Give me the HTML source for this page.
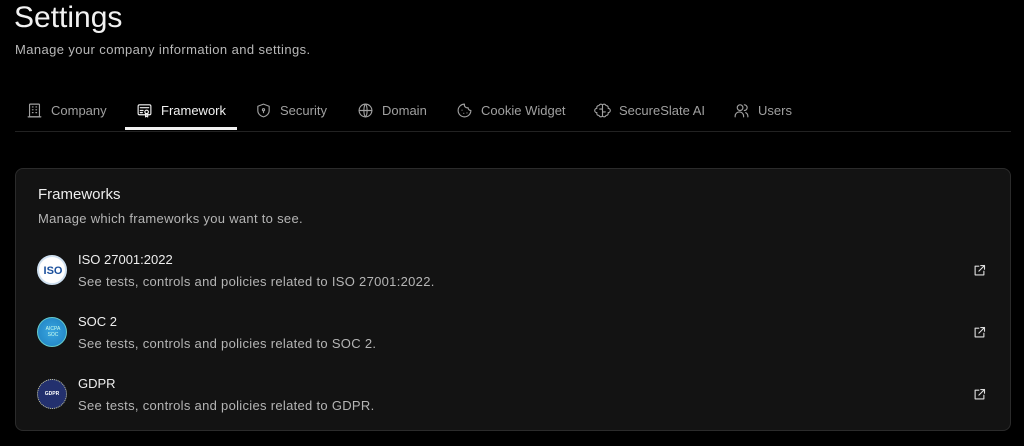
<!DOCTYPE html>
<html><head><meta charset="utf-8"><style>
*{margin:0;padding:0;box-sizing:border-box}
body{width:1024px;height:446px;background:#000;font-family:"Liberation Sans",sans-serif;color:#e8e8e8;position:relative;overflow:hidden}
.a{position:absolute;white-space:nowrap}
.tab{position:absolute;top:102px;font-size:13px;color:#a0a0a0;display:flex;align-items:center;gap:8px}
.tab svg{width:17px;height:17px;fill:none;stroke:#a0a0a0;stroke-width:1.6;stroke-linecap:round;stroke-linejoin:round}
.tab.on{color:#f2f2f2}.tab.on svg{stroke:#f2f2f2}
.card{position:absolute;left:15px;top:168px;width:996px;height:263px;background:#131313;border:1px solid #2b2b2b;border-radius:8px}
.t{font-size:13px;color:#eee}
.d{font-size:13px;color:#b5b5b5;letter-spacing:0.3px}
.lg{position:absolute;left:37px;width:30px;height:30px;border-radius:50%}
.ext{position:absolute;left:972px;width:15px;height:15px;fill:none;stroke:#ddd;stroke-width:1.8;stroke-linecap:round;stroke-linejoin:round}
</style></head><body>
<div class="a" style="left:14px;top:1px;font-size:30px;color:#f2f2f2">Settings</div>
<div class="a" style="left:15px;top:42px;font-size:13px;color:#b8b8b8;letter-spacing:0.4px">Manage your company information and settings.</div>

<div class="tab" style="left:26px"><svg viewBox="0 0 24 24"><rect x="5" y="3" width="14" height="18" rx="1"/><path d="M9 7h1M14 7h1M9 11h1M14 11h1M9 15h1M14 15h1M3 21h18"/></svg>Company</div>
<div class="tab on" style="left:136px"><svg viewBox="0 0 24 24"><rect x="3" y="4" width="18" height="14" rx="2"/><path d="M6 8h12M6 12h4M6 15h3"/><circle cx="15" cy="14" r="2.5"/><path d="M13.5 16v5l1.5-1 1.5 1v-5"/></svg>Framework</div>
<div style="position:absolute;left:125px;top:127px;width:112px;height:3px;background:#f2f2f2;z-index:2"></div>
<div class="tab" style="left:255px"><svg viewBox="0 0 24 24"><path d="M12 3l8 3v6c0 5-4 8-8 9-4-1-8-4-8-9V6z"/><circle cx="12" cy="11" r="1.5"/><path d="M12 12.5v2.5"/></svg>Security</div>
<div class="tab" style="left:357px"><svg viewBox="0 0 24 24"><circle cx="12" cy="12" r="9"/><path d="M3 12h18M12 3c3 3 3 15 0 18M12 3c-3 3-3 15 0 18"/></svg>Domain</div>
<div class="tab" style="left:456px"><svg viewBox="0 0 24 24"><path d="M12 3a9 9 0 1 0 9 9 4 4 0 0 1-4-4 4 4 0 0 1-5-5z"/><path d="M8.5 11.5h.01M15.5 15.5h.01M11 16h.01"/></svg>Cookie Widget</div>
<div class="tab" style="left:594px"><svg viewBox="0 0 24 24"><path d="M12 4a3 3 0 0 0-5 1 3 3 0 0 0-3 4 3 3 0 0 0 0 6 3 3 0 0 0 3 4 3 3 0 0 0 5 1 3 3 0 0 0 5-1 3 3 0 0 0 3-4 3 3 0 0 0 0-6 3 3 0 0 0-3-4 3 3 0 0 0-5-1zM12 4v16M8 10h4M12 14h4"/></svg>SecureSlate AI</div>
<div class="tab" style="left:733px"><svg viewBox="0 0 24 24"><circle cx="10" cy="8" r="4"/><path d="M3 21v-1a6 6 0 0 1 12 0v1M16 4a4 4 0 0 1 0 8M21 21v-1a6 6 0 0 0-3-5"/></svg>Users</div>
<div style="position:absolute;left:15px;top:131px;width:996px;height:1px;background:#222"></div>

<div class="card"></div>
<div class="a" style="left:38px;top:186px;font-size:15px;color:#eee">Frameworks</div>
<div class="a" style="left:38px;top:211px;font-size:13px;color:#b5b5b5;letter-spacing:0.3px">Manage which frameworks you want to see.</div>

<div class="lg" style="top:255px;background:#fff;border:2px solid #cfe0f0"><div style="position:absolute;left:-1px;top:8px;width:30px;text-align:center;font:bold 11px 'Liberation Sans',sans-serif;color:#1a4f9c">ISO</div></div>
<div class="a t" style="left:78px;top:252px">ISO 27001:2022</div>
<div class="a d" style="left:78px;top:274px">See tests, controls and policies related to ISO 27001:2022.</div>
<svg class="ext" style="top:263px" viewBox="0 0 24 24"><path d="M11 5H5v14h14v-6M14 4h6v6M20 4l-9 9"/></svg>

<div class="lg" style="top:317px;background:radial-gradient(circle,#3aa6e0,#1d7fc0);border:1px solid #6cc"><div style="position:absolute;left:0;top:8px;width:30px;text-align:center;font:5px 'Liberation Sans',sans-serif;color:#cfe;line-height:6px">AICPA<br>SOC</div></div>
<div class="a t" style="left:78px;top:314px">SOC 2</div>
<div class="a d" style="left:78px;top:336px">See tests, controls and policies related to SOC 2.</div>
<svg class="ext" style="top:325px" viewBox="0 0 24 24"><path d="M11 5H5v14h14v-6M14 4h6v6M20 4l-9 9"/></svg>

<div class="lg" style="top:379px;background:#23306e;border:1px dotted #cc9"><div style="position:absolute;left:0;top:11px;width:28px;text-align:center;font:bold 5px 'Liberation Sans',sans-serif;color:#fff">GDPR</div></div>
<div class="a t" style="left:78px;top:376px">GDPR</div>
<div class="a d" style="left:78px;top:398px">See tests, controls and policies related to GDPR.</div>
<svg class="ext" style="top:387px" viewBox="0 0 24 24"><path d="M11 5H5v14h14v-6M14 4h6v6M20 4l-9 9"/></svg>
</body></html>
